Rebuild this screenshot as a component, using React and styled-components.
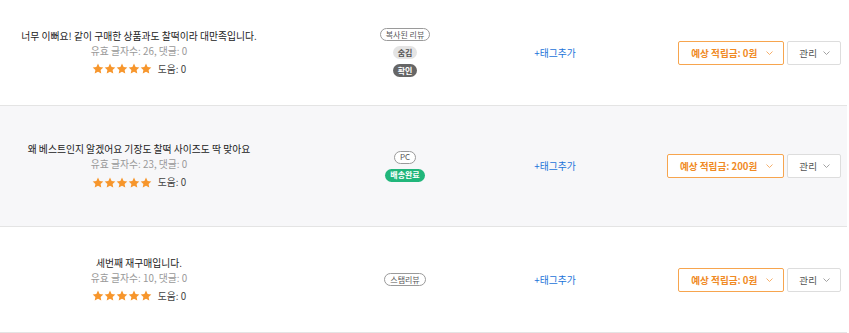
import React from "react";
import styled, { createGlobalStyle } from "styled-components";

const GlobalStyle = createGlobalStyle`
  body {
    margin: 0;
    background: #fff;
    font-family: "Noto Sans CJK KR", "Noto Sans", sans-serif;
  }
`;

const Table = styled.div`
  width: 847px;
`;

const Row = styled.div`
  display: grid;
  grid-template-columns: 278px 254px 46px 1fr;
  align-items: center;
  height: ${(p) => p.height}px;
  box-sizing: border-box;
  border-bottom: 1px solid #e4e4e4;
  background: ${(p) => (p.shaded ? "#f7f7f9" : "#fff")};
`;

const ReviewCell = styled.div`
  display: flex;
  flex-direction: column;
  align-items: center;
  font-size: 9.8px;
  line-height: 15px;
`;

const Content = styled.p`
  margin: 0;
  color: #222;
`;

const Meta = styled.p`
  margin: 0;
  color: #999;
`;

const RatingRow = styled.div`
  display: flex;
  align-items: center;
  gap: 6px;
  margin-top: 3px;
  color: #444;
`;

const Stars = styled.div`
  display: flex;
`;

const BadgeCell = styled.div`
  display: flex;
  flex-direction: column;
  align-items: center;
  gap: 5px;
`;

const Badge = styled.span`
  display: inline-flex;
  align-items: center;
  height: 13px;
  box-sizing: border-box;
  padding: 0 5px;
  border-radius: 7px;
  font-size: 8px;
  line-height: 1;
  ${(p) =>
    p.kind === "outline" &&
    `border: 1px solid #9a9a9a; color: #555; background: #fff;`}
  ${(p) => p.kind === "gray" && `background: #e4e4e4; color: #555; font-weight: 700;`}
  ${(p) => p.kind === "dark" && `background: #666; color: #fff; font-weight: 700;`}
  ${(p) => p.kind === "green" && `background: #21b67b; color: #fff; font-weight: 700;`}
`;

const TagLink = styled.a`
  justify-self: center;
  font-size: 9.8px;
  color: #1a73d9;
  text-decoration: none;
  white-space: nowrap;
`;

const Actions = styled.div`
  display: flex;
  justify-content: flex-end;
  gap: 3px;
  padding-right: 6px;
`;

const SelectButton = styled.button`
  display: flex;
  align-items: center;
  height: 24px;
  box-sizing: border-box;
  padding: 0 10px 0 ${(p) => (p.accent ? 12 : 11)}px;
  gap: ${(p) => (p.accent ? 9 : 6)}px;
  font-family: inherit;
  font-size: 9.6px;
  font-weight: ${(p) => (p.accent ? 700 : 400)};
  background: #fff;
  color: ${(p) => (p.accent ? "#f08a24" : "#555")};
  border: 1px solid ${(p) => (p.accent ? "#f7a54e" : "#ddd")};
  border-radius: 2px;
`;

const Star = () => (
  <svg width="12" height="12" viewBox="0 0 24 24">
    <path
      fill="#f7962c"
      d="M12 1.2l3.2 6.7 7.4.9-5.4 5.1 1.4 7.3L12 17.6l-6.6 3.6 1.4-7.3-5.4-5.1 7.4-.9z"
    />
  </svg>
);

const Chevron = ({ color }) => (
  <svg width="7" height="4" viewBox="0 0 7 4">
    <path d="M.5.5L3.5 3.5 6.5.5" fill="none" stroke={color} strokeWidth="0.9" />
  </svg>
);

const reviews = [
  {
    text: "너무 이뻐요! 같이 구매한 상품과도 찰떡이라 대만족입니다.",
    chars: 26,
    badges: [
      ["outline", "복사된 리뷰"],
      ["gray", "숨김"],
      ["dark", "확인"],
    ],
    point: "0원",
    height: 106,
  },
  {
    text: "왜 베스트인지 알겠어요 기장도 찰떡 사이즈도 딱 맞아요",
    chars: 23,
    badges: [
      ["outline", "PC"],
      ["green", "배송완료"],
    ],
    point: "200원",
    height: 121,
    shaded: true,
  },
  {
    text: "세번째 재구매입니다.",
    chars: 10,
    badges: [["outline", "스탬리뷰"]],
    point: "0원",
    height: 106,
  },
];

const App = () => {
  return (
    <>
      <GlobalStyle />
      <Table>
        {reviews.map((r, i) => (
          <Row key={i} height={r.height} shaded={r.shaded}>
            <ReviewCell>
              <Content>{r.text}</Content>
              <Meta>
                유효 글자수: {r.chars}, 댓글: 0
              </Meta>
              <RatingRow>
                <Stars>
                  {[0, 1, 2, 3, 4].map((s) => (
                    <Star key={s} />
                  ))}
                </Stars>
                도움: 0
              </RatingRow>
            </ReviewCell>
            <BadgeCell>
              {r.badges.map(([kind, label]) => (
                <Badge key={label} kind={kind}>
                  {label}
                </Badge>
              ))}
            </BadgeCell>
            <TagLink href="#">+태그추가</TagLink>
            <Actions>
              <SelectButton accent>
                예상 적립금: {r.point}
                <Chevron color="#f5a65a" />
              </SelectButton>
              <SelectButton>
                관리
                <Chevron color="#999" />
              </SelectButton>
            </Actions>
          </Row>
        ))}
      </Table>
    </>
  );
};

export default App;
